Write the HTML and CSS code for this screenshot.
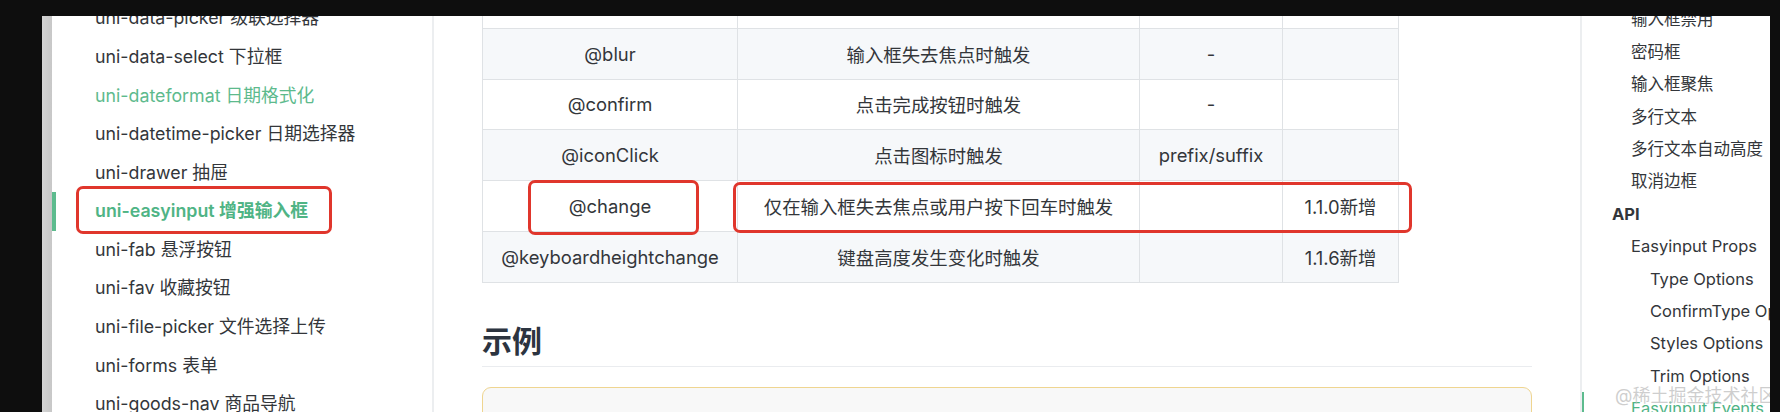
FILE: index.html
```html
<!DOCTYPE html>
<html lang="zh-CN">
<head>
  <meta charset="UTF-8" />
  <meta name="viewport" content="width=device-width, initial-scale=1.0"/>
  <title>uni-easyinput 增强输入框</title>
  <link rel="stylesheet" href="styles.css">
</head>
<body>

<div class="page">
  <div class="scroll-strip"></div>

  <aside class="sidebar">
    <ul class="sidebar-list">
      <li><a class="sidebar-link">uni-data-picker 级联选择器</a></li>
      <li><a class="sidebar-link">uni-data-select 下拉框</a></li>
      <li><a class="sidebar-link visited">uni-dateformat 日期格式化</a></li>
      <li><a class="sidebar-link">uni-datetime-picker 日期选择器</a></li>
      <li><a class="sidebar-link">uni-drawer 抽屉</a></li>
      <li><a class="sidebar-link active">uni-easyinput 增强输入框<span class="mark mark-side"></span></a></li>
      <li><a class="sidebar-link">uni-fab 悬浮按钮</a></li>
      <li><a class="sidebar-link">uni-fav 收藏按钮</a></li>
      <li><a class="sidebar-link">uni-file-picker 文件选择上传</a></li>
      <li><a class="sidebar-link">uni-forms 表单</a></li>
      <li><a class="sidebar-link">uni-goods-nav 商品导航</a></li>
    </ul>
  </aside>

  <main class="main">
    <div class="table-wrap">
      <table class="events">
        <colgroup>
          <col style="width: 255px">
          <col style="width: 402px">
          <col style="width: 143px">
          <col style="width: 116px">
        </colgroup>
        <tbody>
          <tr><td>@focus</td><td>输入框获得焦点时触发</td><td>-</td><td></td></tr>
          <tr><td>@blur</td><td>输入框失去焦点时触发</td><td>-</td><td></td></tr>
          <tr><td>@confirm</td><td>点击完成按钮时触发</td><td>-</td><td></td></tr>
          <tr><td>@iconClick</td><td>点击图标时触发</td><td>prefix/suffix</td><td></td></tr>
          <tr><td>@change</td><td>仅在输入框失去焦点或用户按下回车时触发</td><td></td><td>1.1.0新增</td></tr>
          <tr><td>@keyboardheightchange</td><td>键盘高度发生变化时触发</td><td></td><td>1.1.6新增</td></tr>
        </tbody>
      </table>
      <span class="mark mark-name"></span>
      <span class="mark mark-desc"></span>
    </div>

    <h2 class="section-title">示例</h2>

    <div class="tip-box"></div>
  </main>

  <aside class="toc">
    <ul class="toc-list">
      <li class="toc-item lvl2">输入框禁用</li>
      <li class="toc-item lvl2">密码框</li>
      <li class="toc-item lvl2">输入框聚焦</li>
      <li class="toc-item lvl2">多行文本</li>
      <li class="toc-item lvl2">多行文本自动高度</li>
      <li class="toc-item lvl2">取消边框</li>
      <li class="toc-item lvl1">API</li>
      <li class="toc-item lvl2">Easyinput Props</li>
      <li class="toc-item lvl3">Type Options</li>
      <li class="toc-item lvl3">ConfirmType Options</li>
      <li class="toc-item lvl3">Styles Options</li>
      <li class="toc-item lvl3">Trim Options</li>
      <li class="toc-item lvl2 active">Easyinput Events</li>
    </ul>
  </aside>

  <div class="watermark">@稀土掘金技术社区</div>
</div>

</body>
</html>
```

FILE: styles.css
```css
* {
  box-sizing: border-box;
}

body {
  margin: 0;
  height: 412px;
  padding: 16px 10px 0 42px;
  background-color: #0e0e0e;
  font-family: Inter, "Noto Sans CJK SC", sans-serif;
  color: #33363a;
  overflow: hidden;
}

ul {
  list-style: none;
  margin: 0;
  padding: 0;
}

.page {
  position: relative;
  display: flex;
  height: 396px;
  background-color: white;
  overflow: hidden;
}

.scroll-strip {
  flex: none;
  width: 10px;
  background: linear-gradient(to right, #d3d3d3, #c7c7c7);
}

/* left sidebar */
.sidebar {
  flex: none;
  width: 382px;
  border-right: 2px solid #eceef0;
}

.sidebar-list {
  margin-top: -16.7px;
}

.sidebar-link {
  position: relative;
  display: block;
  height: 38.6px;
  line-height: 38.6px;
  padding-left: 39px;
  border-left: 4px solid transparent;
  font-size: 17.8px;
  white-space: nowrap;
}

.sidebar-link.visited {
  color: #5dba8d;
}

.sidebar-link.active {
  color: #4fb485;
  font-weight: 600;
  border-left-color: #5dbb8e;
}

/* red annotation boxes */
.mark {
  position: absolute;
  border: 3px solid #e0362c;
  border-radius: 7px;
}

.mark-side {
  left: 20px;
  top: -6.7px;
  width: 256px;
  height: 48px;
}

/* main content */
.main {
  flex: 1;
  padding: 0 48px;
}

.table-wrap {
  position: relative;
  width: 916px;
  margin-top: -39px;
}

.events {
  width: 916px;
  table-layout: fixed;
  border-collapse: collapse;
  font-size: 18.4px;
}

.events tr {
  height: 50.8px;
}

.events tr:nth-child(2n) {
  background-color: #f6f8fa;
}

.events td {
  padding: 0 12px;
  border: 1px solid #dfe2e5;
  text-align: center;
  white-space: nowrap;
}

.mark-name {
  left: 46px;
  top: 203px;
  width: 171px;
  height: 55px;
}

.mark-desc {
  left: 251px;
  top: 205px;
  width: 679px;
  height: 51px;
}

.section-title {
  margin: 40px 0 0;
  padding-bottom: 6px;
  font-size: 30px;
  line-height: 37.5px;
  font-weight: 700;
  color: #2c3440;
  border-bottom: 1px solid #eaecef;
}

.tip-box {
  margin-top: 20px;
  height: 120px;
  background-color: #f8f8f8;
  border: 1px solid #efd590;
  border-radius: 9px;
}

/* right toc */
.toc {
  flex: none;
  width: 190px;
  border-left: 2px solid #eceef0;
  overflow: hidden;
}

.toc-list {
  margin-top: -12.6px;
}

.toc-item {
  height: 32.4px;
  line-height: 32.4px;
  font-size: 16.5px;
  white-space: nowrap;
}

.toc-item.lvl1 {
  padding-left: 30px;
  font-weight: 700;
}

.toc-item.lvl2 {
  padding-left: 49px;
}

.toc-item.lvl3 {
  padding-left: 68px;
}

.toc-item.active {
  margin-left: -2px;
  padding-left: 47px;
  border-left: 4px solid #5dbb8e;
  color: #4fb485;
}

.watermark {
  position: absolute;
  left: 1573px;
  top: 369px;
  font-size: 18px;
  line-height: 22px;
  color: rgba(185, 185, 185, 0.7);
  white-space: nowrap;
}
```
